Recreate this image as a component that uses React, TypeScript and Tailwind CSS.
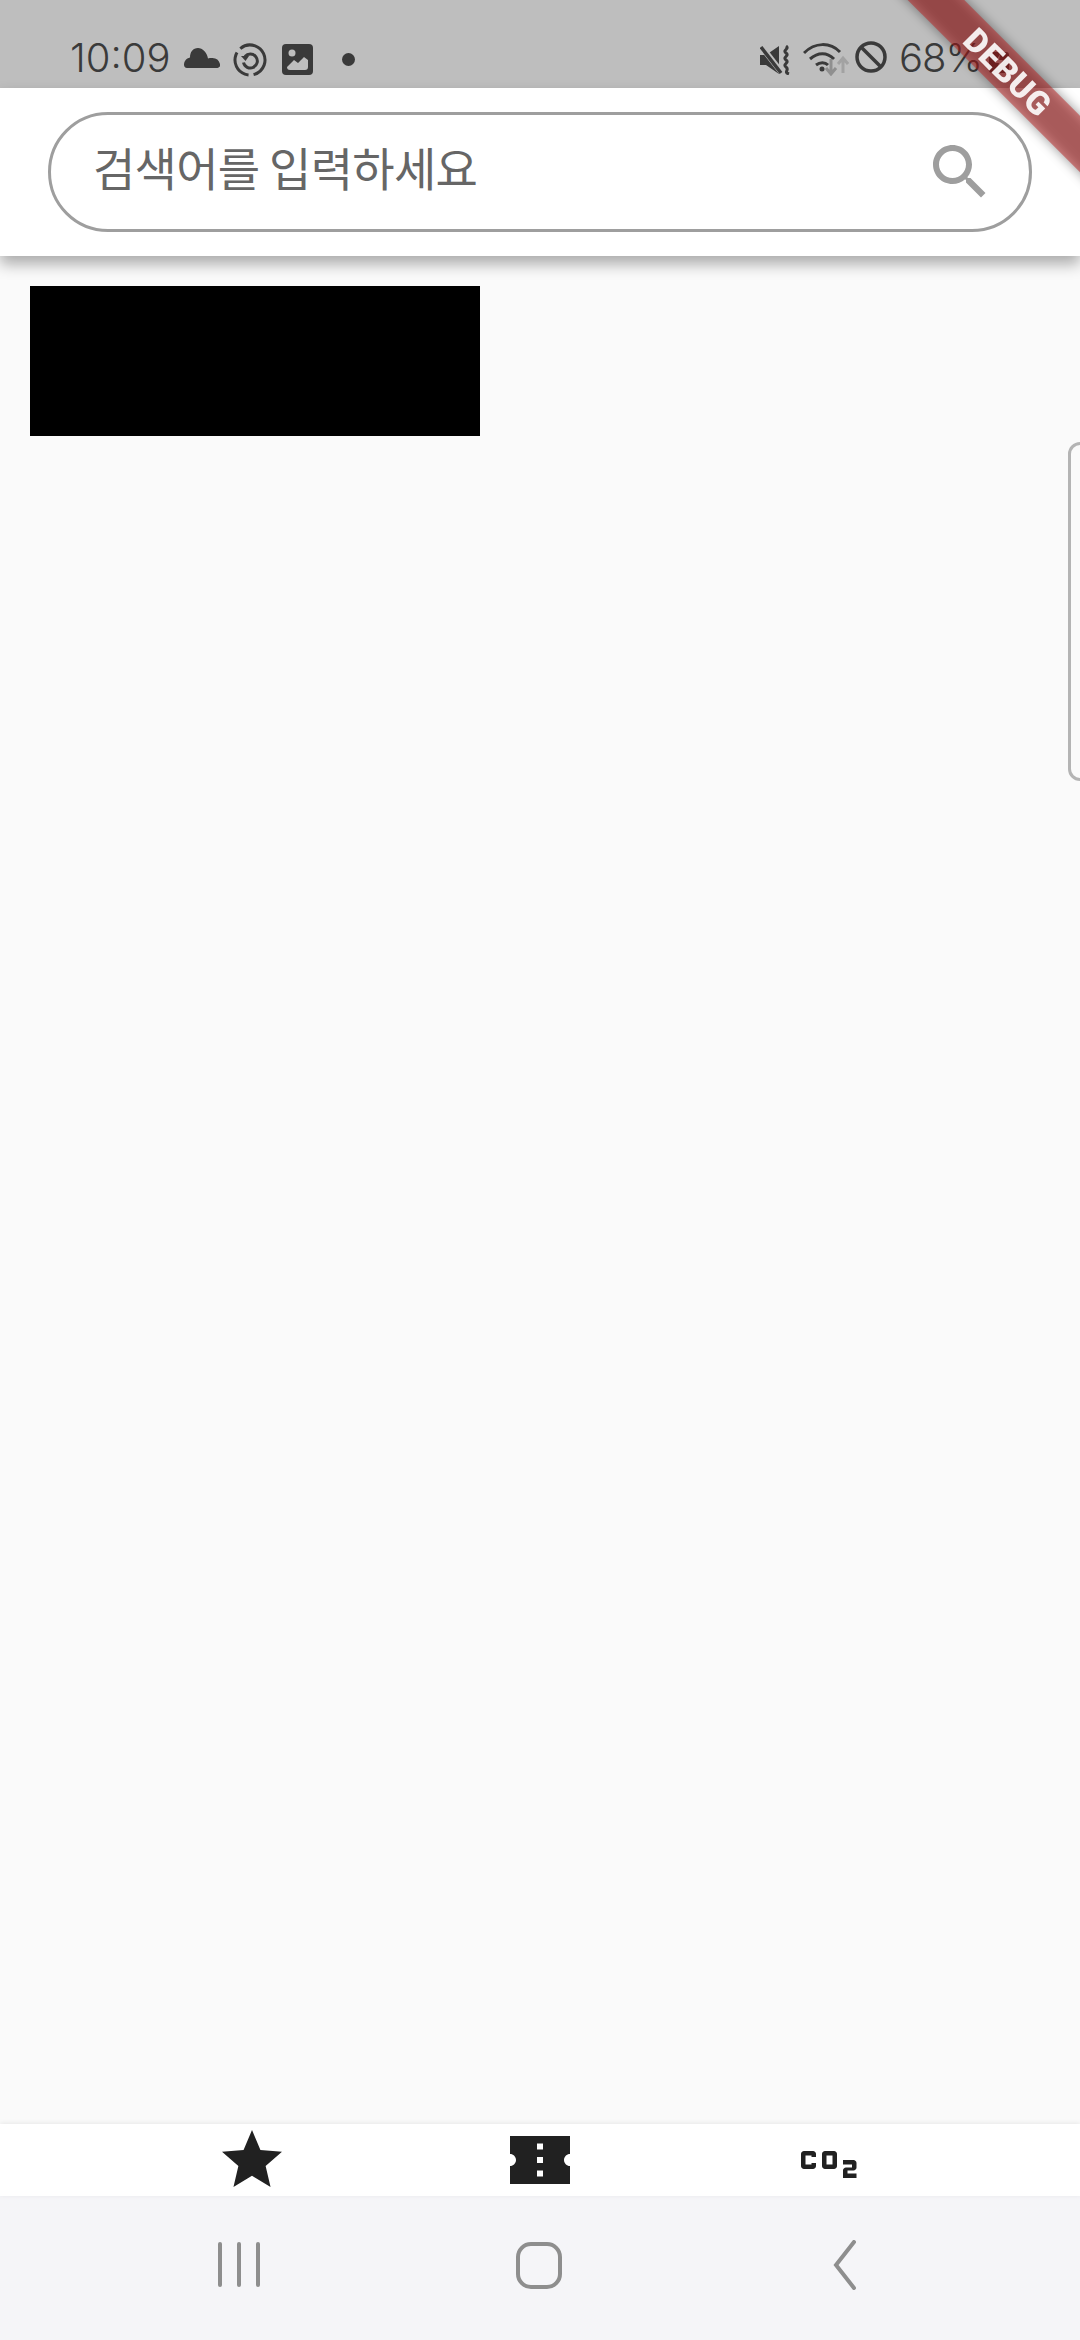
import React from "react";

const P = {
  star: "M12 17.27L18.18 21l-1.64-6.97L22 9.24l-7.19-.61L12 2 9.19 8.63 2 9.24l5.46 4.79L5.82 21z",
  ticket: "M22 10V4H2v6c1.11 0 2 .9 2 2s-.89 2-2 2v6h20v-6c-1.1 0-2-.9-2-2s.9-2 2-2zm-9 7.5h-2v-2h2v2zm0-4.5h-2v-2h2v2zm0-4.5h-2v-2h2v2z",
  co2: "M14 9h-3c-.55 0-1 .45-1 1v4c0 .55.45 1 1 1h3c.55 0 1-.45 1-1v-4c0-.55-.45-1-1-1zm-.5 4.5h-2v-3h2v3zM8 13v1c0 .55-.45 1-1 1H4c-.55 0-1-.45-1-1v-4c0-.55.45-1 1-1h3c.55 0 1 .45 1 1v1H6.5v-.5h-2v3h2V13H8zm12.5 2.5h-2v1h3V18H17v-2.5c0-.55.45-1 1-1h2v-1h-3V12h3.5c.55 0 1 .45 1 1v1.5c0 .55-.45 1-1 1z",
  search: "M15.5 14h-.79l-.28-.27C15.41 12.59 16 11.11 16 9.5 16 5.91 13.09 3 9.5 3S3 5.91 3 9.5 5.91 16 9.5 16c1.61 0 3.09-.59 4.23-1.57l.27.28v.79l5 4.99L20.49 19l-4.99-5zm-6 0C7.01 14 5 11.99 5 9.5S7.01 5 9.5 5 14 7.01 14 9.5 11.99 14 9.5 14z",
};

function Material({ d, size = 72, color }: { d: string; size?: number; color: string }) {
  return (
    <svg width={size} height={size} viewBox="0 0 24 24" fill={color} className="block shrink-0">
      <path d={d} />
    </svg>
  );
}

const ink = "#3a3a3a";

function StatusBar() {
  return (
    <div className="h-[88px] bg-[#bebebe] flex items-start pt-[40px] pl-[70px] text-[#3a3a3a]">
      <span className="text-[40px] leading-[36px] font-light font-['Inter','Roboto',sans-serif] tracking-[0px] w-[100px]">10:09</span>
      <svg width="36" height="20" viewBox="0 0 36 20" className="mt-[8px] ml-[14px] shrink-0">
        <path d="M3 20h30a3 3 0 0 0 3-4 8 8 0 0 0-8-6c-1.500 0-3 0-4 .5C23 4.500 18.500 0 14 0 9 0 6 4 6 9.500 2 10.500 0 13.500 0 16.500 0 18.500 1 20 3 20z" fill={ink} />
      </svg>
      <svg width="34" height="34" viewBox="0 0 34 34" className="mt-[3px] ml-[13px] shrink-0" fill="none" stroke={ink}>
        <circle cx="17" cy="17" r="15" strokeWidth="3" strokeDasharray="38 5 30 5 16 100" transform="rotate(-70 17 17)" />
        <path d="M12 13.500a7 7 0 1 1-1.500 6" strokeWidth="3" />
        <path d="M8 13h8l-3.500 5z" fill={ink} stroke="none" />
      </svg>
      <svg width="31" height="31" viewBox="0 0 31 31" className="mt-[4px] ml-[15px] shrink-0">
        <rect width="31" height="31" rx="4" fill={ink} />
        <circle cx="10" cy="9" r="3.500" fill="#bebebe" />
        <path d="M5 23c0 2 1 3 3 3h15c2 0 3-1 3-3v-7l-4-3-6 6-4-3z" fill="#bebebe" />
      </svg>
      <div className="w-[13px] h-[13px] rounded-full bg-[#3a3a3a] mt-[13px] ml-[29px] shrink-0" />

      <svg width="32" height="30" viewBox="0 0 32 30" className="mt-[5px] ml-[405px] shrink-0" fill="none">
        <path d="M0 10h6l13-9v28L6 20H0z" fill={ink} />
        <path d="M1 1l21 27" stroke="#bebebe" strokeWidth="6" />
        <path d="M1 2l20 26" stroke={ink} strokeWidth="3.500" />
        <path d="M26 1c4 3-4 4 0 7s-4 4 0 7 -4 4 0 7 -3 5 3 7" stroke={ink} strokeWidth="3" />
      </svg>
      <svg width="46" height="34" viewBox="0 0 46 34" className="mt-[2px] ml-[11px] shrink-0" fill="none" stroke={ink} strokeWidth="3">
        <path d="M1 11C12 0 27 0 37 10" />
        <path d="M7 17c8-7 17-7 24 0" />
        <path d="M13 23c4-3 9-3 12 0" />
        <circle cx="19" cy="27" r="2.500" fill={ink} stroke="none" />
        <path d="M28 17v14M23 26l5 6 5-6" stroke="#8f8f8f" />
        <path d="M40 31V17M35 22l5-6 5 6" stroke="#a2a2a2" />
      </svg>
      <svg width="32" height="32" viewBox="0 0 32 32" className="ml-[6px] mt-[1px] shrink-0" fill="none" stroke={ink} strokeWidth="3.500">
        <circle cx="16" cy="16" r="14" />
        <path d="M6 6l20 20" />
      </svg>
      <span className="text-[40px] leading-[36px] font-light font-['Inter','Roboto',sans-serif] tracking-[-1px] ml-[12px] w-[90px] shrink-0">68%</span>
      <svg width="20" height="21" viewBox="0 0 20 21" className="mt-[12px] shrink-0">
        <rect width="20" height="21" rx="3" fill={ink} />
        <path d="M11 2l-5 9h4l-2 7 6-10h-4z" fill="#d8d8d8" />
      </svg>
    </div>
  );
}

function SearchHeader() {
  return (
    <header className="relative z-10 h-[168px] bg-white px-[48px] pt-[24px] shadow-[0_8px_14px_rgba(0,0,0,0.32)]">
      <div className="h-[120px] rounded-[60px] border-[3px] border-[#9e9e9e] flex items-center justify-between pl-[42px] pr-[33px]">
        <span className="text-[46px] leading-[60px] text-[#666666] font-['Noto_Sans_CJK_KR',sans-serif] mb-[12px] tracking-[-0.7px]">검색어를 입력하세요</span>
        <Material d={P.search} color="#9e9e9e" />
      </div>
    </header>
  );
}

function BottomTabs() {
  return (
    <nav className="relative h-[72px] bg-white px-[108px] grid grid-cols-3 shadow-[0_-1px_5px_rgba(0,0,0,0.08)]">
      <div className="flex justify-center"><Material d={P.star} color="#212121" /></div>
      <div className="flex justify-center"><Material d={P.ticket} color="#212121" /></div>
      <div className="flex justify-center"><Material d={P.co2} color="#212121" /></div>
    </nav>
  );
}

function SystemNav() {
  return (
    <div className="h-[144px] bg-[#f5f5f8] flex items-start pt-[46px] pl-[218px]">
      <div className="flex gap-[15px] shrink-0">
        <div className="w-[4px] h-[45px] rounded-full bg-[#8e8e8e]" />
        <div className="w-[4px] h-[45px] rounded-full bg-[#8e8e8e]" />
        <div className="w-[4px] h-[45px] rounded-full bg-[#8e8e8e]" />
      </div>
      <div className="w-[46px] h-[47px] border-[4px] border-[#8e8e8e] rounded-[15px] ml-[256px] shrink-0" />
      <svg width="30" height="50" viewBox="0 0 30 50" className="ml-[265px] shrink-0 -mt-[2px]" fill="none" stroke="#8e8e8e" strokeWidth="4" strokeLinecap="round">
        <path d="M27 2 9 25l18 23" />
      </svg>
    </div>
  );
}

function DebugBanner() {
  return (
    <div className="absolute left-[808px] top-[52px] w-[400px] h-[40px] rotate-45 z-30">
      <div className="absolute inset-0 bg-black/40 blur-[6px]" />
      <div className="absolute inset-0 bg-[#b71c1c]/50 flex items-center justify-center">
        <span className="text-white text-[33px] leading-none font-black font-['Roboto',sans-serif] tracking-[0.5px] opacity-90">DEBUG</span>
      </div>
    </div>
  );
}

export default function App() {
  return (
    <div className="relative w-[1080px] h-[2340px] overflow-hidden flex flex-col bg-[#fafafa]">
      <StatusBar />
      <SearchHeader />
      <main className="flex-1 pt-[30px] pl-[30px]">
        <div className="w-[450px] h-[150px] bg-black" />
      </main>
      <BottomTabs />
      <SystemNav />
      <div className="absolute left-[1068px] top-[442px] w-[24px] h-[339px] rounded-l-[12px] border-[3px] border-[#b4b4b4]" />
      <DebugBanner />
    </div>
  );
}
